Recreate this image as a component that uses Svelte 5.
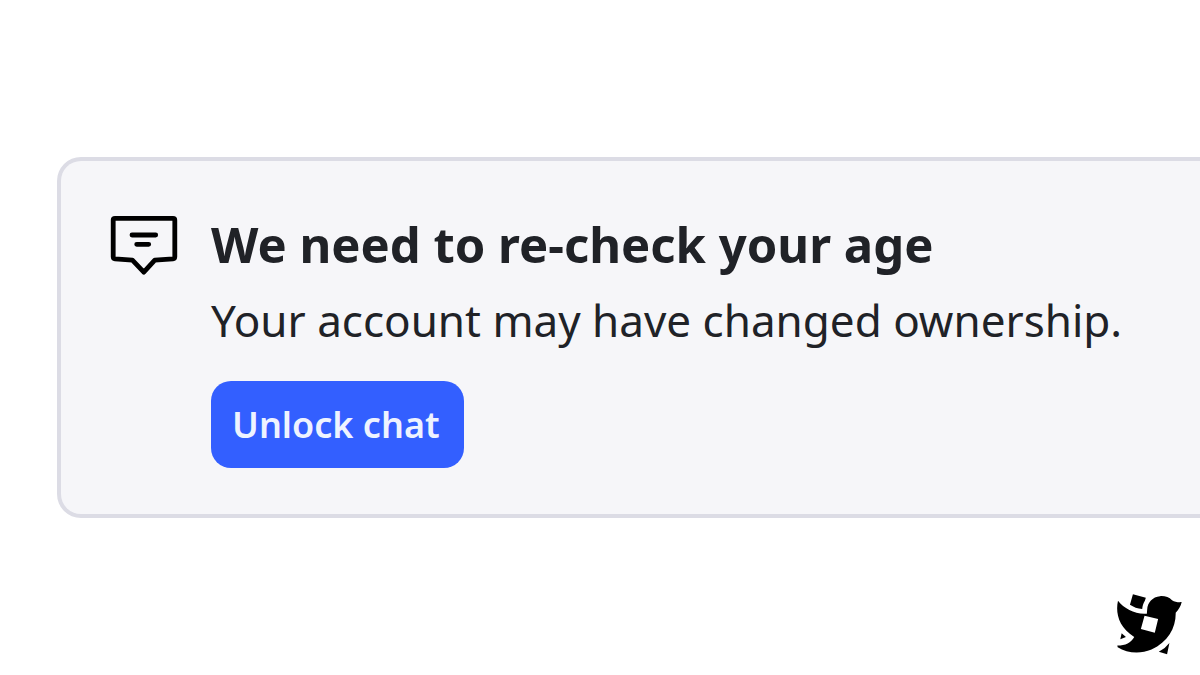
<script lang="ts">
  let {
    title = 'We need to re-check your age',
    message = 'Your account may have changed ownership.',
    action = 'Unlock chat'
  }: { title?: string, message?: string, action?: string } = $props()
</script>

<main class="page">
  <section class="notice" aria-labelledby="notice-title">
    <svg class="chat-icon" viewBox="10 10 68 60" aria-hidden="true">
      <path d="M15 13.3H73Q74.8 13.3 74.8 15.1V51.8Q74.8 53.7 73 53.8L54.8 55.2L43.8 67.2L32.4 55.2L15 53.8Q13.2 53.7 13.2 51.8V15.1Q13.2 13.3 15 13.3Z" />
      <path d="M32 30H55.7M36.7 39.3H48.7" />
    </svg>
    <div class="content">
      <h1 id="notice-title">{title}</h1>
      <p>{message}</p>
      <button type="button">{action}</button>
    </div>
  </section>

  <footer>
    <svg class="bird" viewBox="36 29 196 183" aria-hidden="true">
      <path
        fill-rule="evenodd"
        d="M39 49C31 84 40 129 88 158C78 176 62 184 37 184L38 189C66 207 105 211 140 196C190 174 214 130 213 85C221 77 229 65 231 53C220 54 210 52 202 47C193 38 180 34 166 35C143 37 128 54 127 75L126 88C91 91 58 73 39 49ZM119 94L160 104L150 145L108 134Z"
      />
      <path d="M84 29L123 40L120 49C115 57 113 65 112 74C98 73 86 68 75 61Z" />
      <path d="M50 147L63 158L46 165Z" />
      <path d="M194 176L187 210L162 203Q181 193 194 176Z" />
    </svg>
  </footer>
</main>

<style>
  :global(body) {
    margin: 0;
    background: #fff;
  }

  .page {
    box-sizing: border-box;
    display: flex;
    flex-direction: column;
    justify-content: space-between;
    min-height: 100vh;
    padding: 157px 0 20px 57px;
    overflow: hidden;
    color: #202227;
    font-family: "Noto Sans", "Open Sans", sans-serif;
  }

  .notice {
    display: flex;
    align-items: flex-start;
    gap: 33px;
    padding: 54px 0 46px 49px;
    border: 4px solid #dcdce5;
    border-right: 0;
    border-radius: 24px 0 0 24px;
    background: #f6f6f9;
  }

  .chat-icon {
    flex: none;
    width: 68px;
    height: 60px;
    fill: none;
    stroke: #000;
    stroke-width: 4.8;
    stroke-linecap: round;
    stroke-linejoin: round;
  }

  h1,
  p {
    margin: 0;
  }

  h1 {
    font-size: 49px;
    font-weight: 700;
    line-height: 58px;
  }

  p {
    margin-top: 17px;
    font-size: 44px;
    line-height: 60px;
  }

  button {
    height: 87px;
    margin-top: 31px;
    padding: 0 24px 0 21px;
    border: 0;
    border-radius: 20px;
    background: #335fff;
    color: #eef3ff;
    font: inherit;
    font-size: 36px;
    font-weight: 600;
    cursor: pointer;
  }

  footer {
    display: flex;
    justify-content: flex-end;
    padding-right: 18px;
  }

  .bird {
    width: 65px;
    height: 61px;
    fill: #000;
  }
</style>
